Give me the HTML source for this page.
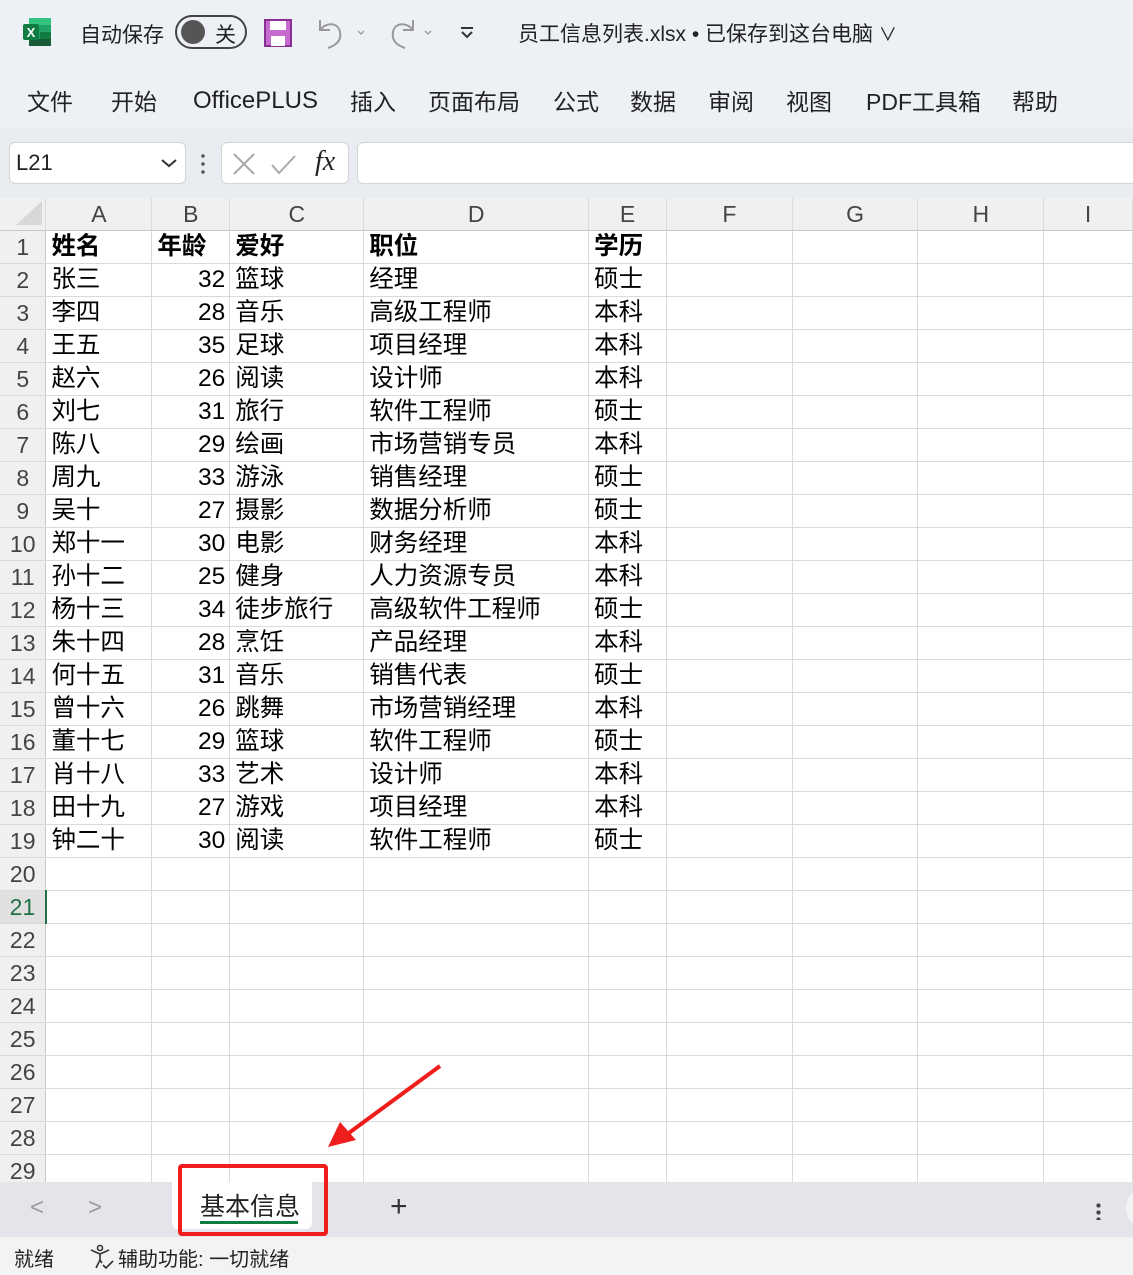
<!DOCTYPE html>
<html><head><meta charset="utf-8"><style>
*{box-sizing:border-box;margin:0;padding:0}
body{width:1133px;height:1275px;overflow:hidden;background:#fff;font-family:"Liberation Sans","Noto Sans CJK SC",sans-serif;position:relative;color:#222}
.abs{position:absolute}
#top{left:0;top:0;width:1133px;height:127px;background:#edf0f5;box-shadow:0 2px 4px rgba(0,0,0,.12)}
#fbar{left:0;top:127px;width:1133px;height:71px;background:#e9ecf1}
.t{font-size:21px;color:#222;white-space:nowrap}
.menu{top:83px;font-size:23px;color:#222}
table{border-collapse:collapse;table-layout:fixed;position:absolute;left:0;top:198px}
td{border-right:1px solid #dadada;border-bottom:1px solid #dadada;height:33px;font-size:24.5px;padding:0 5px;white-space:nowrap;overflow:hidden;color:#000;line-height:30px}
tr.h td{height:32px;background:#f0f0f0;color:#444;text-align:center;font-size:23px;border-bottom:1px solid #c8c8c8;border-right:1px solid #dcdcdc}
td.rn{background:#f0f0f0;color:#444;text-align:center;font-size:23px;padding:0;border-right:1px solid #c8c8c8}
td.n{text-align:right;padding-right:4px}
tr.b td:not(.rn){font-weight:bold}
#tabs{left:0;top:1182px;width:1133px;height:55px;background:#e3e5ea}
#status{left:0;top:1237px;width:1133px;height:38px;background:#f3f3f3}
</style></head><body>
<div id="top" class="abs"></div>
<svg class="abs" style="left:22px;top:17px" width="30" height="30" viewBox="0 0 30 30">
<rect x="7" y="1" width="22" height="28" rx="2" fill="#21a366"/>
<rect x="7" y="1" width="22" height="7" fill="#33c481"/>
<rect x="18" y="15" width="11" height="7" fill="#107c41"/>
<rect x="7" y="22" width="22" height="7" fill="#185c37"/>
<rect x="1" y="7" width="16" height="16" rx="2" fill="#107c41"/>
<text x="9" y="20" font-size="13" font-weight="bold" fill="#fff" text-anchor="middle" font-family="Liberation Sans">X</text>
</svg>
<div class="abs t" style="left:80px;top:19px">自动保存</div>
<div class="abs" style="left:175px;top:15px;width:72px;height:34px;border:2px solid #444;border-radius:17px"></div>
<div class="abs" style="left:181px;top:20px;width:24px;height:24px;border-radius:50%;background:#555"></div>
<div class="abs t" style="left:215px;top:19px">关</div>
<svg class="abs" style="left:263px;top:18px" width="30" height="30" viewBox="0 0 30 30"><rect x="2" y="2" width="26" height="26" fill="#c66bd0" stroke="#8a3094" stroke-width="2"/><rect x="7" y="3" width="16" height="9" fill="#fff"/><rect x="8" y="18" width="14" height="10" fill="#fff"/></svg>
<svg class="abs" style="left:312px;top:16px" width="60" height="34" viewBox="0 0 60 34" fill="none" stroke="#999" stroke-width="2"><path d="M8 4v10h10M8 14c6-8 18-8 20 2s-6 14-12 16"/><path d="M46 15l3 3 3-3" stroke-width="1.3"/></svg>
<svg class="abs" style="left:383px;top:16px" width="60" height="34" viewBox="0 0 60 34" fill="none" stroke="#999" stroke-width="2"><path d="M30 4v10H20M30 14c-6-8-18-8-20 2s6 14 12 16"/><path d="M42 15l3 3 3-3" stroke-width="1.3"/></svg>
<svg class="abs" style="left:458px;top:24px" width="18" height="18" viewBox="0 0 18 18" fill="none" stroke="#333" stroke-width="2"><path d="M3 4h12M4 8l5 5 5-5"/></svg>
<div class="abs t" style="left:518px;top:18px">员工信息列表.xlsx • 已保存到这台电脑 <span style="font-size:18px">∨</span></div>
<div class="abs menu" style="left:27px">文件</div>
<div class="abs menu" style="left:111px">开始</div>
<div class="abs menu" style="left:193px;top:87px;font-size:24px">OfficePLUS</div>
<div class="abs menu" style="left:350px">插入</div>
<div class="abs menu" style="left:428px">页面布局</div>
<div class="abs menu" style="left:553px">公式</div>
<div class="abs menu" style="left:630px">数据</div>
<div class="abs menu" style="left:708px">审阅</div>
<div class="abs menu" style="left:786px">视图</div>
<div class="abs menu" style="left:866px">PDF工具箱</div>
<div class="abs menu" style="left:1012px">帮助</div>

<div id="fbar" class="abs"></div>
<div class="abs" style="left:9px;top:142px;width:177px;height:42px;background:#fff;border:1px solid #d4d4d4;border-radius:6px"></div>
<div class="abs t" style="left:16px;top:150px;font-size:22px">L21</div>
<svg class="abs" style="left:159px;top:156px" width="20" height="14" viewBox="0 0 20 14" fill="none" stroke="#333" stroke-width="2"><path d="M3 4l7 6 7-6"/></svg>
<div class="abs" style="left:201px;top:152px;width:4px;height:22px;background:radial-gradient(circle,#555 1.6px,transparent 2px) 0 0/4px 8px"></div>
<div class="abs" style="left:221px;top:142px;width:128px;height:42px;background:#fff;border:1px solid #d4d4d4;border-radius:6px"></div>
<svg class="abs" style="left:230px;top:150px" width="110" height="28" viewBox="0 0 110 28" fill="none" stroke="#aaa" stroke-width="2"><path d="M4 4l20 20M24 4L4 24"/><path d="M42 15l7 8 16-17"/></svg>
<div class="abs" style="left:315px;top:146px;font-family:'Liberation Serif',serif;font-style:italic;font-size:28px;color:#222">fx</div>
<div class="abs" style="left:357px;top:142px;width:790px;height:42px;background:#fff;border:1px solid #d4d4d4;border-radius:6px"></div>

<table>
<colgroup><col style="width:46px"><col style="width:106px"><col style="width:78px"><col style="width:134px"><col style="width:225px"><col style="width:78px"><col style="width:126px"><col style="width:126px"><col style="width:126px"><col style="width:89px"></colgroup>
<tr class="h"><td style="background:#f0f0f0"></td><td>A</td><td>B</td><td>C</td><td>D</td><td>E</td><td>F</td><td>G</td><td>H</td><td>I</td></tr>
<tr class="b"><td class="rn">1</td><td>姓名</td><td>年龄</td><td>爱好</td><td>职位</td><td>学历</td><td></td><td></td><td></td><td></td></tr>
<tr><td class="rn">2</td><td>张三</td><td class="n">32</td><td>篮球</td><td>经理</td><td>硕士</td><td></td><td></td><td></td><td></td></tr>
<tr><td class="rn">3</td><td>李四</td><td class="n">28</td><td>音乐</td><td>高级工程师</td><td>本科</td><td></td><td></td><td></td><td></td></tr>
<tr><td class="rn">4</td><td>王五</td><td class="n">35</td><td>足球</td><td>项目经理</td><td>本科</td><td></td><td></td><td></td><td></td></tr>
<tr><td class="rn">5</td><td>赵六</td><td class="n">26</td><td>阅读</td><td>设计师</td><td>本科</td><td></td><td></td><td></td><td></td></tr>
<tr><td class="rn">6</td><td>刘七</td><td class="n">31</td><td>旅行</td><td>软件工程师</td><td>硕士</td><td></td><td></td><td></td><td></td></tr>
<tr><td class="rn">7</td><td>陈八</td><td class="n">29</td><td>绘画</td><td>市场营销专员</td><td>本科</td><td></td><td></td><td></td><td></td></tr>
<tr><td class="rn">8</td><td>周九</td><td class="n">33</td><td>游泳</td><td>销售经理</td><td>硕士</td><td></td><td></td><td></td><td></td></tr>
<tr><td class="rn">9</td><td>吴十</td><td class="n">27</td><td>摄影</td><td>数据分析师</td><td>硕士</td><td></td><td></td><td></td><td></td></tr>
<tr><td class="rn">10</td><td>郑十一</td><td class="n">30</td><td>电影</td><td>财务经理</td><td>本科</td><td></td><td></td><td></td><td></td></tr>
<tr><td class="rn">11</td><td>孙十二</td><td class="n">25</td><td>健身</td><td>人力资源专员</td><td>本科</td><td></td><td></td><td></td><td></td></tr>
<tr><td class="rn">12</td><td>杨十三</td><td class="n">34</td><td>徒步旅行</td><td>高级软件工程师</td><td>硕士</td><td></td><td></td><td></td><td></td></tr>
<tr><td class="rn">13</td><td>朱十四</td><td class="n">28</td><td>烹饪</td><td>产品经理</td><td>本科</td><td></td><td></td><td></td><td></td></tr>
<tr><td class="rn">14</td><td>何十五</td><td class="n">31</td><td>音乐</td><td>销售代表</td><td>硕士</td><td></td><td></td><td></td><td></td></tr>
<tr><td class="rn">15</td><td>曾十六</td><td class="n">26</td><td>跳舞</td><td>市场营销经理</td><td>本科</td><td></td><td></td><td></td><td></td></tr>
<tr><td class="rn">16</td><td>董十七</td><td class="n">29</td><td>篮球</td><td>软件工程师</td><td>硕士</td><td></td><td></td><td></td><td></td></tr>
<tr><td class="rn">17</td><td>肖十八</td><td class="n">33</td><td>艺术</td><td>设计师</td><td>本科</td><td></td><td></td><td></td><td></td></tr>
<tr><td class="rn">18</td><td>田十九</td><td class="n">27</td><td>游戏</td><td>项目经理</td><td>本科</td><td></td><td></td><td></td><td></td></tr>
<tr><td class="rn">19</td><td>钟二十</td><td class="n">30</td><td>阅读</td><td>软件工程师</td><td>硕士</td><td></td><td></td><td></td><td></td></tr>
<tr><td class="rn">20</td><td></td><td></td><td></td><td></td><td></td><td></td><td></td><td></td><td></td></tr>
<tr><td class="rn" style="background:#e0e0e0;color:#217346;border-right:2px solid #217346">21</td><td></td><td></td><td></td><td></td><td></td><td></td><td></td><td></td><td></td></tr>
<tr><td class="rn">22</td><td></td><td></td><td></td><td></td><td></td><td></td><td></td><td></td><td></td></tr>
<tr><td class="rn">23</td><td></td><td></td><td></td><td></td><td></td><td></td><td></td><td></td><td></td></tr>
<tr><td class="rn">24</td><td></td><td></td><td></td><td></td><td></td><td></td><td></td><td></td><td></td></tr>
<tr><td class="rn">25</td><td></td><td></td><td></td><td></td><td></td><td></td><td></td><td></td><td></td></tr>
<tr><td class="rn">26</td><td></td><td></td><td></td><td></td><td></td><td></td><td></td><td></td><td></td></tr>
<tr><td class="rn">27</td><td></td><td></td><td></td><td></td><td></td><td></td><td></td><td></td><td></td></tr>
<tr><td class="rn">28</td><td></td><td></td><td></td><td></td><td></td><td></td><td></td><td></td><td></td></tr>
<tr><td class="rn">29</td><td></td><td></td><td></td><td></td><td></td><td></td><td></td><td></td><td></td></tr>
</table>
<div class="abs" style="left:16px;top:201px;width:0;height:0;border-left:26px solid transparent;border-bottom:24px solid #d8d8d8"></div>

<div id="tabs" class="abs"></div>
<div class="abs" style="left:30px;top:1194px;font-size:24px;color:#999">&lt;</div>
<div class="abs" style="left:88px;top:1194px;font-size:24px;color:#999">&gt;</div>
<div class="abs" style="left:172px;top:1182px;width:140px;height:47px;background:#fff;border-radius:0 0 6px 6px"></div>
<div class="abs" style="left:200px;top:1187px;font-size:25px;color:#222">基本信息</div>
<div class="abs" style="left:200px;top:1221px;width:98px;height:3px;background:#107c41"></div>
<div class="abs" style="left:178px;top:1164px;width:150px;height:72px;border:4px solid #f01d1d;border-radius:4px"></div>
<div class="abs" style="left:390px;top:1190px;font-size:30px;color:#333;font-weight:300">+</div>
<div class="abs" style="left:1096px;top:1202px;width:5px;height:18px;background:radial-gradient(circle,#444 2px,transparent 2.3px) 0 0/5px 7px"></div>
<div class="abs" style="left:1126px;top:1190px;width:30px;height:36px;border-radius:50%;background:#f2f3f5"></div>
<svg class="abs" style="left:320px;top:1060px" width="130" height="95" viewBox="0 0 130 95"><path d="M120 6L22 78" stroke="#f01d1d" stroke-width="4"/><path d="M8 87L20 62L36 80Z" fill="#f01d1d"/></svg>

<div id="status" class="abs"></div>
<div class="abs" style="left:14px;top:1243px;font-size:20px;color:#222">就绪</div>
<svg class="abs" style="left:88px;top:1244px" width="28" height="26" viewBox="0 0 28 26" fill="none" stroke="#333" stroke-width="1.6"><circle cx="12" cy="4" r="2.5"/><path d="M3 6l9 4 9-4M12 10v6l-4 8M12 16l2 3"/><path d="M15 21l3 3 7-7"/></svg>
<div class="abs" style="left:118px;top:1243px;font-size:20px;color:#222">辅助功能: 一切就绪</div>
</body></html>
